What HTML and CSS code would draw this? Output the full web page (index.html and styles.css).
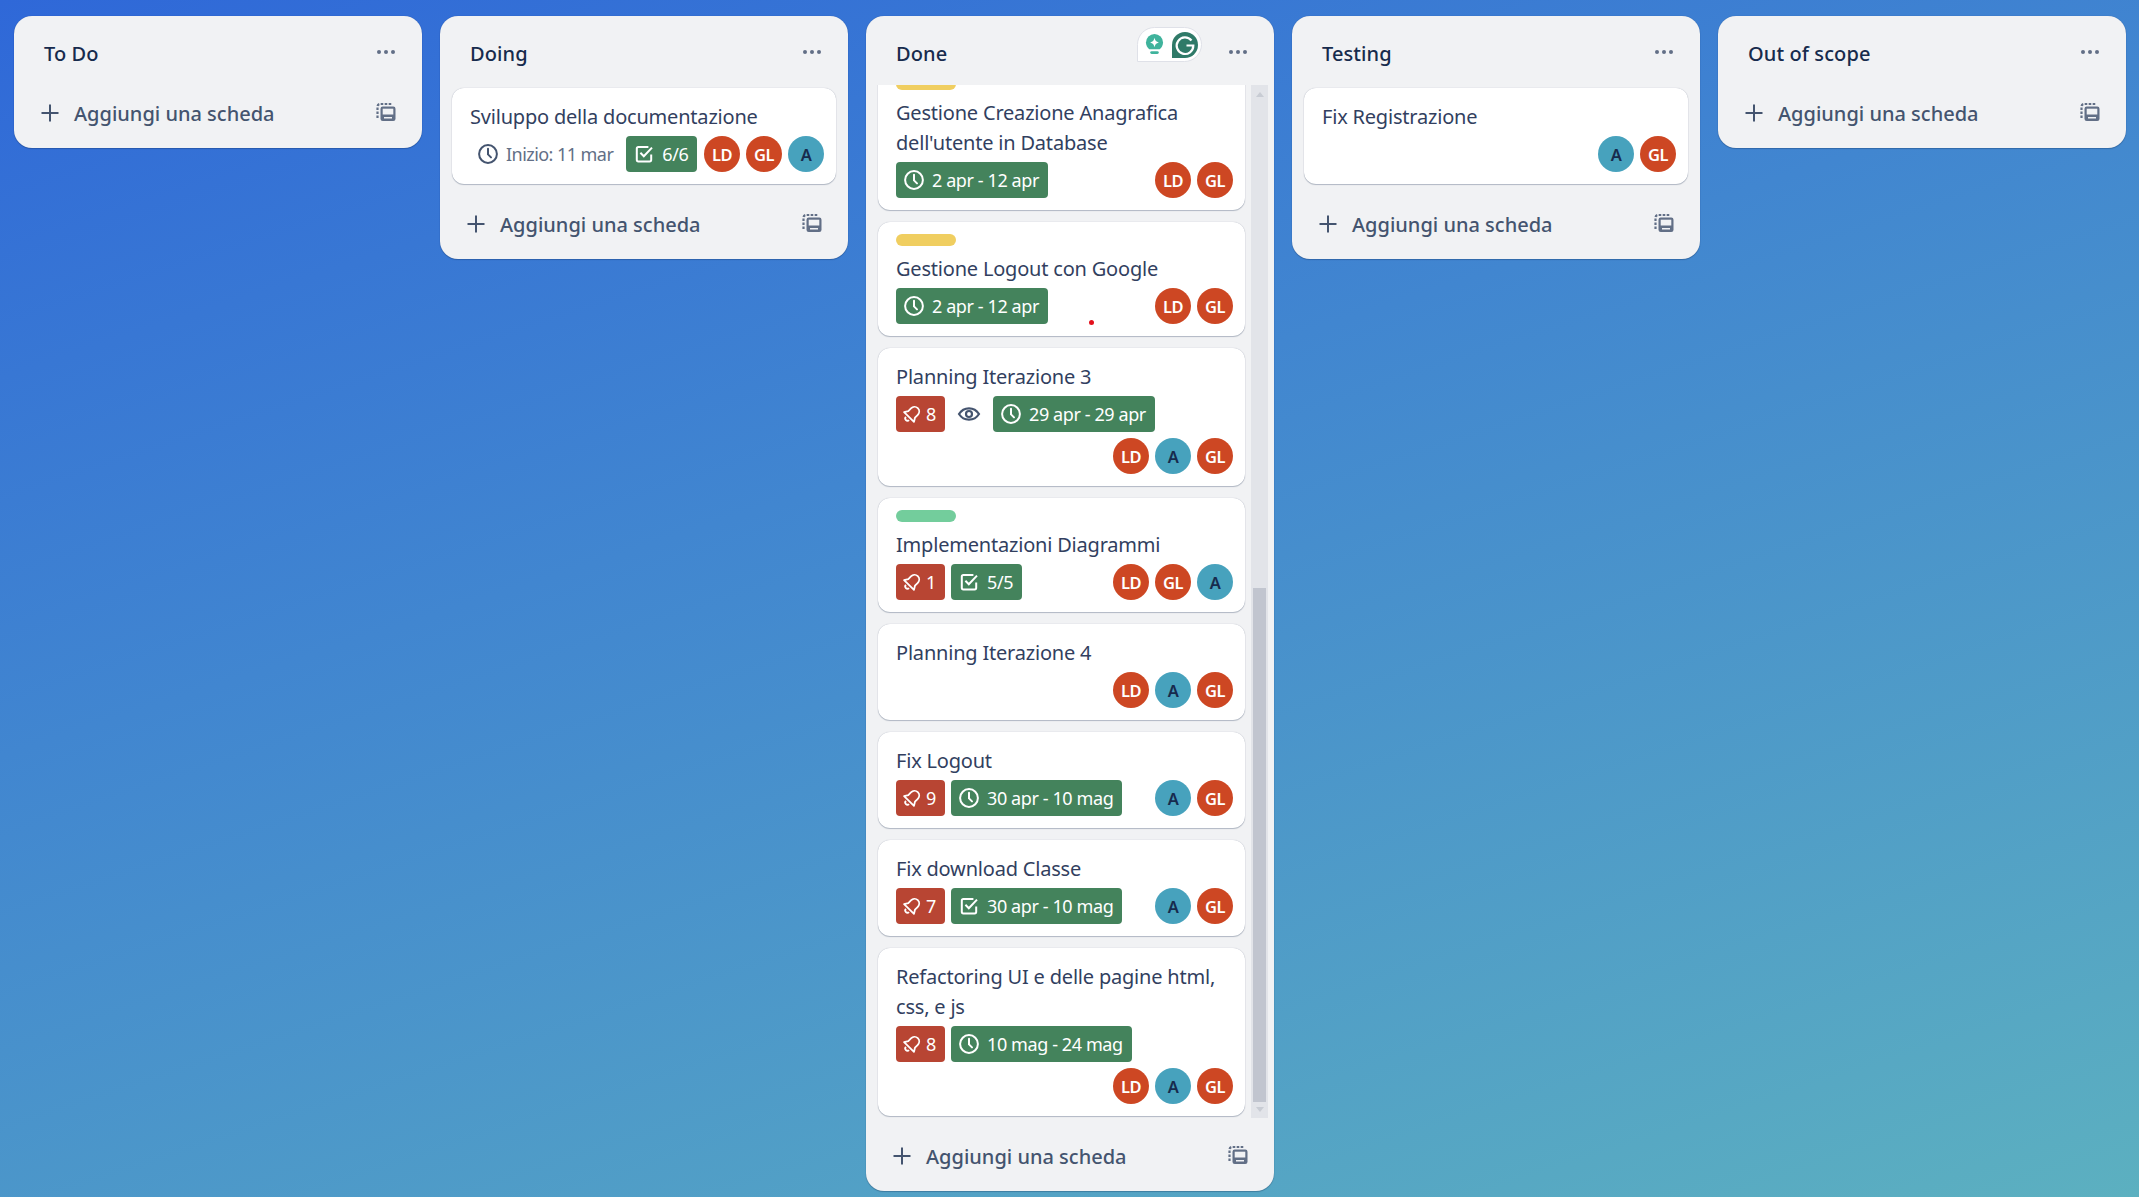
FILE: index.html
```html
<!doctype html>
<html lang="it">
<head>
    <meta charset="utf-8">
    <title>Board</title>
    <link rel="stylesheet" href="styles.css">
</head>
<body>
    <svg class="sprite" width="0" height="0" aria-hidden="true">
        <symbol id="i-clock" viewBox="0 0 24 24">
            <circle cx="12" cy="12" r="8.9" fill="none" stroke="currentColor" stroke-width="2"/>
            <path d="M12 6.800V12.400l3 3" fill="none" stroke="currentColor" stroke-width="2" stroke-linecap="round" stroke-linejoin="round"/>
        </symbol>
        <symbol id="i-check" viewBox="0 0 24 24">
            <path d="M19.200 12.500v5.300a1.600 1.600 0 0 1-1.600 1.600H6.400a1.600 1.600 0 0 1-1.600-1.600V6.600A1.600 1.600 0 0 1 6.400 5h10" fill="none" stroke="currentColor" stroke-width="2"/>
            <path d="M8.400 10.800l3.400 3.400 8.200-8.600" fill="none" stroke="currentColor" stroke-width="2"/>
        </symbol>
        <symbol id="i-bell" viewBox="0 0 20 20">
            <g transform="rotate(45 10 10)" fill="none" stroke="currentColor" stroke-width="1.800" stroke-linejoin="round">
                <path d="M10 1.800c3.100 0 4.700 2.400 4.700 5v3.700l2.300 3.700H3l2.300-3.700V6.800c0-2.600 1.600-5 4.700-5z"/>
                <path d="M7.800 16.400a2.200 2.200 0 0 0 4.400 0"/>
            </g>
        </symbol>
        <symbol id="i-eye" viewBox="0 0 24 24">
            <path d="M2 12C4.400 8.200 7.800 6.300 12 6.300s7.600 1.900 10 5.700c-2.400 3.800-5.800 5.700-10 5.700S4.400 15.800 2 12z" fill="none" stroke="currentColor" stroke-width="2.200"/>
            <circle cx="12" cy="12" r="3" fill="none" stroke="currentColor" stroke-width="2.200"/>
        </symbol>
        <symbol id="i-plus" viewBox="0 0 24 24">
            <path d="M12 3.500v17M3.500 12h17" fill="none" stroke="currentColor" stroke-width="2"/>
        </symbol>
        <symbol id="i-template" viewBox="0 0 24 24">
            <path d="M3.500 18V6.500a2.500 2.500 0 0 1 2.500-2.500h12" fill="none" stroke="currentColor" stroke-width="2.200" stroke-dasharray="2.600 1.400"/>
            <rect x="6.500" y="6.500" width="15" height="14.500" rx="2.200" fill="currentColor"/>
            <rect x="8.700" y="8.700" width="10.600" height="5.800" fill="#f1f2f4"/>
            <rect x="10" y="17" width="8" height="1.500" fill="#f1f2f4"/>
        </symbol>
        <symbol id="i-dots" viewBox="0 0 24 24">
            <circle cx="5" cy="12" r="2" fill="currentColor"/>
            <circle cx="12" cy="12" r="2" fill="currentColor"/>
            <circle cx="19" cy="12" r="2" fill="currentColor"/>
        </symbol>
    </svg>

    <div class="board">
        <!-- To Do -->
        <section class="column">
            <header class="column-header">
                <h2>To Do</h2>
                <svg class="dots"><use href="#i-dots"/></svg>
            </header>
            <footer class="column-footer">
                <svg class="plus"><use href="#i-plus"/></svg>
                <span class="add-text">Aggiungi una scheda</span>
                <svg class="template"><use href="#i-template"/></svg>
            </footer>
        </section>

        <!-- Doing -->
        <section class="column">
            <header class="column-header">
                <h2>Doing</h2>
                <svg class="dots"><use href="#i-dots"/></svg>
            </header>
            <div class="card-list">
                <article class="card">
                    <p class="card-title">Sviluppo della documentazione</p>
                    <div class="card-meta card-meta-oneline">
                        <span class="badge badge-plain"><svg><use href="#i-clock"/></svg>Inizio: 11 mar</span>
                        <span class="badge badge-green"><svg><use href="#i-check"/></svg>6/6</span>
                        <div class="members">
                            <span class="avatar avatar-ld">LD</span>
                            <span class="avatar avatar-gl">GL</span>
                            <span class="avatar avatar-a">A</span>
                        </div>
                    </div>
                </article>
            </div>
            <footer class="column-footer">
                <svg class="plus"><use href="#i-plus"/></svg>
                <span class="add-text">Aggiungi una scheda</span>
                <svg class="template"><use href="#i-template"/></svg>
            </footer>
        </section>

        <!-- Done -->
        <section class="column">
            <header class="column-header">
                <h2>Done</h2>
                <svg class="dots"><use href="#i-dots"/></svg>
            </header>
            <div class="grammarly">
                <svg class="bulb" viewBox="0 0 20 24">
                    <path d="M10 1a9 9 0 0 1 9 9c0 3.200-1.700 5.400-3.500 7H4.500C2.700 15.400 1 13.200 1 10a9 9 0 0 1 9-9z" fill="#3fb39c"/>
                    <path d="M10 5c.6 3 1.700 4.200 4.600 5-2.900.8-4 2-4.600 5-.6-3-1.700-4.200-4.600-5 2.900-.8 4-2 4.600-5z" fill="#fff"/>
                    <rect x="5.500" y="19" width="9" height="3" rx="1.500" fill="#3fb39c"/>
                </svg>
                <svg class="gmark" viewBox="0 0 28 28">
                    <path d="M14 1a13 13 0 1 1 0 26H1V14A13 13 0 0 1 14 1z" fill="#2f7a68"/>
                    <path d="M20.500 9.500A8.300 8.300 0 1 0 22.300 14.500H15.500" fill="none" stroke="#fff" stroke-width="2.200"/>
                </svg>
            </div>
            <div class="scroll-area">
                <div class="card-list card-list-scrolled">
                    <article class="card card-cut">
                        <span class="label label-yellow"></span>
                        <p class="card-title">Gestione Creazione Anagrafica dell'utente in Database</p>
                        <div class="card-meta">
                            <span class="badge badge-green"><svg><use href="#i-clock"/></svg>2 apr - 12 apr</span>
                            <div class="members">
                                <span class="avatar avatar-ld">LD</span>
                                <span class="avatar avatar-gl">GL</span>
                            </div>
                        </div>
                    </article>
                    <article class="card">
                        <span class="label label-yellow"></span>
                        <p class="card-title">Gestione Logout con Google</p>
                        <div class="card-meta">
                            <span class="badge badge-green"><svg><use href="#i-clock"/></svg>2 apr - 12 apr</span>
                            <div class="members">
                                <span class="avatar avatar-ld">LD</span>
                                <span class="avatar avatar-gl">GL</span>
                            </div>
                        </div>
                        <span class="red-dot"></span>
                    </article>
                    <article class="card">
                        <p class="card-title">Planning Iterazione 3</p>
                        <div class="card-meta">
                            <span class="badge badge-red"><svg><use href="#i-bell"/></svg>8</span>
                            <span class="badge badge-icon"><svg><use href="#i-eye"/></svg></span>
                            <span class="badge badge-green"><svg><use href="#i-clock"/></svg>29 apr - 29 apr</span>
                            <div class="members">
                                <span class="avatar avatar-ld">LD</span>
                                <span class="avatar avatar-a">A</span>
                                <span class="avatar avatar-gl">GL</span>
                            </div>
                        </div>
                    </article>
                    <article class="card">
                        <span class="label label-green"></span>
                        <p class="card-title">Implementazioni Diagrammi</p>
                        <div class="card-meta">
                            <span class="badge badge-red"><svg><use href="#i-bell"/></svg>1</span>
                            <span class="badge badge-green"><svg><use href="#i-check"/></svg>5/5</span>
                            <div class="members">
                                <span class="avatar avatar-ld">LD</span>
                                <span class="avatar avatar-gl">GL</span>
                                <span class="avatar avatar-a">A</span>
                            </div>
                        </div>
                    </article>
                    <article class="card">
                        <p class="card-title">Planning Iterazione 4</p>
                        <div class="card-meta">
                            <div class="members">
                                <span class="avatar avatar-ld">LD</span>
                                <span class="avatar avatar-a">A</span>
                                <span class="avatar avatar-gl">GL</span>
                            </div>
                        </div>
                    </article>
                    <article class="card">
                        <p class="card-title">Fix Logout</p>
                        <div class="card-meta">
                            <span class="badge badge-red"><svg><use href="#i-bell"/></svg>9</span>
                            <span class="badge badge-green"><svg><use href="#i-clock"/></svg>30 apr - 10 mag</span>
                            <div class="members">
                                <span class="avatar avatar-a">A</span>
                                <span class="avatar avatar-gl">GL</span>
                            </div>
                        </div>
                    </article>
                    <article class="card">
                        <p class="card-title">Fix download Classe</p>
                        <div class="card-meta">
                            <span class="badge badge-red"><svg><use href="#i-bell"/></svg>7</span>
                            <span class="badge badge-green"><svg><use href="#i-check"/></svg>30 apr - 10 mag</span>
                            <div class="members">
                                <span class="avatar avatar-a">A</span>
                                <span class="avatar avatar-gl">GL</span>
                            </div>
                        </div>
                    </article>
                    <article class="card">
                        <p class="card-title">Refactoring UI e delle pagine html, css, e js</p>
                        <div class="card-meta">
                            <span class="badge badge-red"><svg><use href="#i-bell"/></svg>8</span>
                            <span class="badge badge-green"><svg><use href="#i-clock"/></svg>10 mag - 24 mag</span>
                            <div class="members">
                                <span class="avatar avatar-ld">LD</span>
                                <span class="avatar avatar-a">A</span>
                                <span class="avatar avatar-gl">GL</span>
                            </div>
                        </div>
                    </article>
                </div>
                <div class="scrollbar">
                    <span class="arrow arrow-up"></span>
                    <span class="thumb"></span>
                    <span class="arrow arrow-down"></span>
                </div>
            </div>
            <footer class="column-footer">
                <svg class="plus"><use href="#i-plus"/></svg>
                <span class="add-text">Aggiungi una scheda</span>
                <svg class="template"><use href="#i-template"/></svg>
            </footer>
        </section>

        <!-- Testing -->
        <section class="column">
            <header class="column-header">
                <h2>Testing</h2>
                <svg class="dots"><use href="#i-dots"/></svg>
            </header>
            <div class="card-list">
                <article class="card">
                    <p class="card-title">Fix Registrazione</p>
                    <div class="card-meta">
                        <div class="members">
                            <span class="avatar avatar-a">A</span>
                            <span class="avatar avatar-gl">GL</span>
                        </div>
                    </div>
                </article>
            </div>
            <footer class="column-footer">
                <svg class="plus"><use href="#i-plus"/></svg>
                <span class="add-text">Aggiungi una scheda</span>
                <svg class="template"><use href="#i-template"/></svg>
            </footer>
        </section>

        <!-- Out of scope -->
        <section class="column">
            <header class="column-header">
                <h2>Out of scope</h2>
                <svg class="dots"><use href="#i-dots"/></svg>
            </header>
            <footer class="column-footer">
                <svg class="plus"><use href="#i-plus"/></svg>
                <span class="add-text">Aggiungi una scheda</span>
                <svg class="template"><use href="#i-template"/></svg>
            </footer>
        </section>
    </div>
</body>
</html>
```

FILE: styles.css
```css
* {
    box-sizing: border-box;
}
html, body {
    height: 100%;
}
body {
    margin: 0;
    overflow: hidden;
    font-family: "Noto Sans", "Open Sans", sans-serif;
    color: #172b4d;
    background: linear-gradient(162deg, #2f68d8 0%, #4186d0 40%, #5cb0c0 100%);
}
.sprite {
    display: none;
}
.board {
    display: flex;
    align-items: flex-start;
    gap: 18px;
    height: 100%;
    padding: 16px 14px 6px;
}

/* columns */
.column {
    position: relative;
    display: flex;
    flex-direction: column;
    flex: 0 0 408px;
    max-height: 100%;
    background-color: #f1f2f4;
    border-radius: 18px;
    box-shadow: 0 1px 1px rgba(9,30,66,0.25), 0 0 1px rgba(9,30,66,0.31);
}
.column-header {
    display: flex;
    align-items: center;
    justify-content: space-between;
    flex: none;
    height: 69px;
    padding: 6px 24px 0 30px;
}
.column-header h2 {
    margin: 0;
    font-size: 20px;
    font-weight: 500;
    letter-spacing: 0.1px;
}
.dots {
    width: 24px;
    height: 24px;
    margin-top: -4px;
    color: #626f86;
}
.column-footer {
    display: flex;
    align-items: center;
    flex: none;
    height: 63px;
    padding: 0 24px 7px 24px;
    color: #44546f;
}
.plus {
    width: 24px;
    height: 24px;
    flex: none;
}
.add-text {
    margin-left: 12px;
    font-size: 20px;
    font-weight: 500;
}
.template {
    width: 24px;
    height: 24px;
    margin-left: auto;
    margin-top: -3px;
    color: #626f86;
}

/* cards */
.card-list {
    display: flex;
    flex-direction: column;
    gap: 12px;
    padding: 3px 12px 2px;
    margin-bottom: 10px;
}
.scroll-area {
    display: flex;
    flex: 1;
    min-height: 0;
    overflow: hidden;
    margin-bottom: 10px;
    padding-right: 6px;
}
.card-list-scrolled {
    flex: 1;
    min-width: 0;
    padding: 0 6px 2px 12px;
    margin-bottom: 0;
}
.card-cut {
    margin-top: -19px;
}
.card {
    position: relative;
    padding: 12px 12px 12px 18px;
    background-color: #fff;
    border-radius: 12px;
    box-shadow: 0 1px 1px rgba(9,30,66,0.25), 0 0 1px rgba(9,30,66,0.31);
}
.label {
    display: block;
    width: 60px;
    height: 12px;
    margin-bottom: 6px;
    border-radius: 6px;
}
.label-yellow {
    background-color: #f0ce60;
}
.label-green {
    background-color: #73cd9c;
}
.card-title {
    margin: 0 0 4px;
    padding-top: 2px;
    font-size: 20px;
    line-height: 30px;
    color: #323f5f;
    letter-spacing: -0.2px;
}
.card-meta {
    display: flex;
    flex-wrap: wrap;
    gap: 6px;
}
.card-meta-oneline {
    flex-wrap: nowrap;
}
.badge {
    display: inline-flex;
    align-items: center;
    flex: none;
    height: 36px;
    padding: 0 9px 0 6px;
    border-radius: 4px;
    font-size: 18px;
    letter-spacing: -0.4px;
    color: #fff;
}
.badge svg {
    width: 24px;
    height: 24px;
    flex: none;
    margin-right: 6px;
}
.badge-green {
    background-color: #44835c;
}
.badge-red {
    width: 49px;
    padding: 0 0 0 6px;
    background-color: #b84533;
}
.badge-red svg {
    width: 20px;
    height: 20px;
    margin-right: 4px;
}
.badge-plain {
    padding-right: 7px;
    letter-spacing: -0.55px;
    color: #626f86;
}
.badge-plain svg {
    color: #44546f;
}
.badge-icon {
    justify-content: center;
    width: 36px;
    padding: 0;
    color: #44546f;
}
.badge-icon svg {
    margin: 0;
}
.members {
    display: flex;
    flex: none;
    gap: 6px;
    margin-left: auto;
}
.avatar {
    display: flex;
    align-items: center;
    justify-content: center;
    width: 36px;
    height: 36px;
    border-radius: 50%;
    font-size: 16.500px;
    font-weight: 600;
    letter-spacing: -0.5px;
    color: #fff;
}
.avatar-ld, .avatar-gl {
    background-color: #cd4723;
}
.avatar-a {
    background-color: #47a2bd;
    color: #172b4d;
}
.red-dot {
    position: absolute;
    left: 211px;
    top: 98px;
    width: 5px;
    height: 5px;
    border-radius: 50%;
    background-color: #e3101c;
}

/* hand drawn scrollbar of the Done list */
.scrollbar {
    display: flex;
    flex-direction: column;
    align-items: center;
    flex: 0 0 17px;
    background-color: #e2e4e9;
}
.arrow {
    flex: none;
    width: 0;
    height: 0;
    border-left: 4px solid transparent;
    border-right: 4px solid transparent;
}
.arrow-up {
    margin: 7px 0 auto;
    border-bottom: 5px solid #c8ccd4;
}
.arrow-down {
    margin: 5px 0 6px;
    border-top: 5px solid #c8ccd4;
}
.thumb {
    flex: none;
    width: 13px;
    height: 514px;
    background-color: #c1c5cf;
}

/* grammarly widget sitting on the Done column */
.grammarly {
    position: absolute;
    top: 11px;
    left: 271px;
    display: flex;
    align-items: center;
    gap: 7px;
    width: 65px;
    height: 35px;
    padding: 0 1px 0 7px;
    background-color: #fff;
    border: 1px solid #dfe1e8;
    border-radius: 18px 18px 18px 0;
}
.bulb {
    width: 19px;
    height: 23px;
    flex: none;
}
.gmark {
    width: 28px;
    height: 28px;
    flex: none;
}
```
